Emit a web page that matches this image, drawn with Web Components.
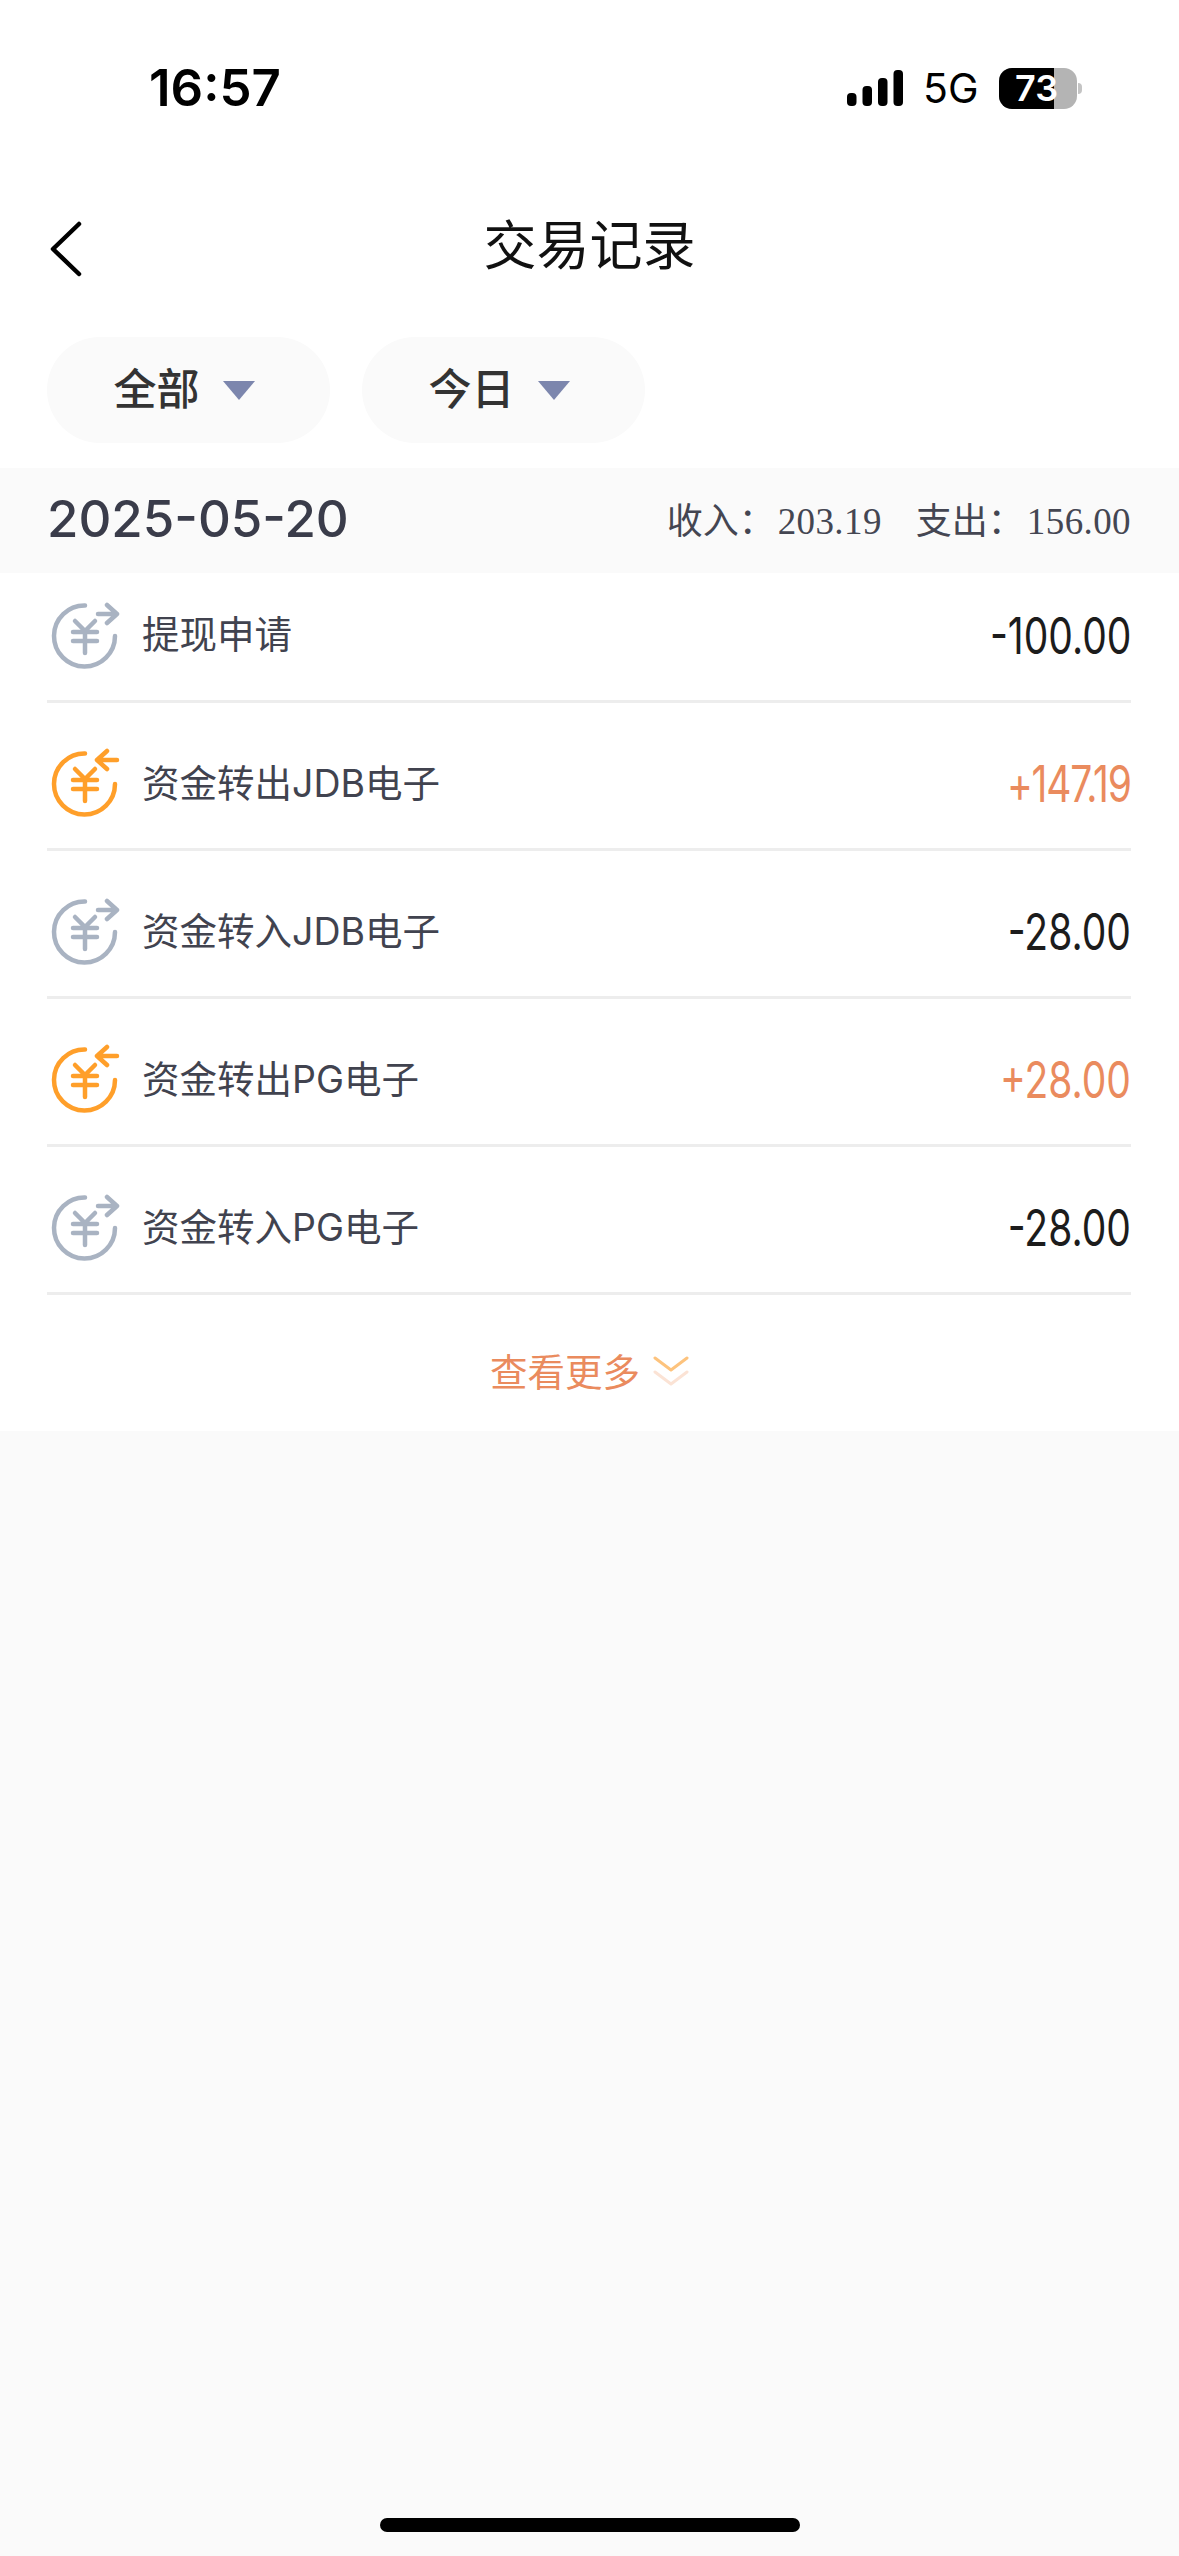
<!DOCTYPE html>
<html><head><meta charset="utf-8">
<style>
html,body{margin:0;padding:0;background:#fafafa;font-family:"Noto Sans CJK SC","Noto Sans",sans-serif}
</style></head><body>
<record-page></record-page>
<script>
const CJK='"Noto Sans CJK SC","Noto Sans",sans-serif';
class StatusBar extends HTMLElement{
  constructor(){super();this.attachShadow({mode:'open'}).innerHTML=`<style>
  :host{display:flex;height:177px;background:#fff;box-sizing:border-box;padding:60px 102px 0 149px;align-items:flex-start;justify-content:space-between;font-family:Inter,"Liberation Sans",sans-serif;color:#000}
  .t{font-size:51px;font-weight:600;line-height:56px}
  .r{display:flex;align-items:center;gap:22px;height:56px}
  .g{font-size:41px;font-weight:400;line-height:56px;width:52px;margin-left:-2px;margin-right:2px;white-space:nowrap}
  .b{position:relative;width:78px;height:41px;border-radius:13px;background:#b4b4b4}
  .b i{position:absolute;left:0;top:0;bottom:0;width:55px;background:#000;border-radius:13px 0 0 13px}
  .b span{position:absolute;left:16px;top:0;color:#fff;font-size:36px;font-weight:600;line-height:41px}
  .n{position:absolute;left:79px;top:15px;width:4px;height:11px;background:#c4c4c4;border-radius:0 6px 6px 0}
  </style><div class="t">16:57</div><div class="r">
  <svg width="56" height="36" viewBox="0 0 56 36"><rect x="0" y="23" width="9.5" height="13" rx="4"/><rect x="15.500" y="16" width="9.500" height="20" rx="4"/><rect x="31" y="8" width="9.500" height="28" rx="4"/><rect x="46.500" y="0" width="9.500" height="36" rx="4"/></svg>
  <div class="g">5G</div><div class="b"><i></i><span>73</span><div class="n"></div></div></div>`;}
}
class NavBar extends HTMLElement{
  constructor(){super();this.attachShadow({mode:'open'}).innerHTML=`<style>
  :host{display:flex;height:136px;background:#fff;align-items:center;justify-content:center;position:relative;font:400 53px ${CJK};color:#111}
  span{margin-top:-6px}
  svg{position:absolute;left:49px;top:44px}
  </style><svg width="34" height="56" viewBox="0 0 34 56" fill="none" stroke="#000" stroke-width="4.500" stroke-linecap="round" stroke-linejoin="round"><path d="M30 3 4 28l26 25"/></svg><span><slot></slot></span>`;}
}
class FilterPill extends HTMLElement{
  constructor(){super();this.attachShadow({mode:'open'}).innerHTML=`<style>
  :host{display:flex;width:283px;height:106px;border-radius:53px;background:#fafafa;align-items:center;justify-content:center;gap:23px;font:500 43px ${CJK};color:#333;box-sizing:border-box;padding-right:9px}
  span{margin-top:-8px}
  i{width:0;height:0;border-left:16px solid transparent;border-right:16px solid transparent;border-top:19px solid #7c86ad}
  </style><span><slot></slot></span><i></i>`;}
}
class DayHead extends HTMLElement{
  constructor(){super();this.attachShadow({mode:'open'}).innerHTML=`<style>
  :host{display:flex;height:105px;background:#fafafa;align-items:center;justify-content:space-between;padding:0 48px 0 47px;color:#3a3c4a}
  .d{font:500 51px Inter,"Noto Sans",sans-serif;margin-top:-4px}
  .s{font:36px ${CJK};color:#444652;display:flex;gap:34px;margin-top:-6px;align-items:center}
  b{font:37px "Liberation Serif",serif;letter-spacing:.4px;margin-left:3px}
  </style><div class="d">2025-05-20</div><div class="s"><span>收入：<b>203.19</b></span><span>支出：<b>156.00</b></span></div>`;}
}
const ICON=(c,inb)=>`<svg width="72" height="72" viewBox="0 0 72 72" fill="none" stroke="${c}" stroke-width="4.500" stroke-linecap="round" stroke-linejoin="round"><path d="M37 5.500A30.500 30.500 0 1 0 67 36"/><path d="M27 21l10 10 10-10M25 32h24M25 41h24M37 32v21"/>${inb?'<path d="M69 12H49M59 3 49 12l10 9"/>':'<path d="M50 14h19M59 5l10 9-10 9"/>'}</svg>`;
class TxRow extends HTMLElement{
  connectedCallback(){
    const plus=this.getAttribute('amount').startsWith('+');
    this.attachShadow({mode:'open'}).innerHTML=`<style>
    :host{display:flex;height:148px;padding-top:19px;margin:0 48px 0 47px;box-sizing:border-box;border-bottom:3px solid #ededed;align-items:center}
    :host([first]){height:130px;padding-top:0}
    :host([tight]) .a{letter-spacing:-1.500px}
    svg{margin:-2px 0 0 1px}
    .l{margin-left:22px;flex:1;font:37.500px Inter,${CJK};color:#41434f;margin-top:-10px}
    .a{font:400 50px Inter,"Liberation Sans",sans-serif;transform:scaleX(.78);transform-origin:right;color:${plus?'#ea8b5e':'#1c1c1c'};white-space:nowrap;margin-top:-2px}
    </style>${ICON(plus?'#ff9f2a':'#a9b3c2',plus)}<div class="l">${this.getAttribute('label')}</div><div class="a">${this.getAttribute('amount')}</div>`;
  }
}
class RecordPage extends HTMLElement{
  constructor(){super();this.attachShadow({mode:'open'}).innerHTML=`<style>
  :host{display:block;height:2556px;position:relative;background:#fafafa}
  .f{display:flex;gap:32px;background:#fff;box-sizing:border-box;height:155px;padding:24px 47px 0}
  .list{background:#fff}
  .more{display:flex;height:136px;padding-top:16px;box-sizing:border-box;align-items:center;justify-content:center;gap:13px;color:#ea8b5e;font:37.500px ${CJK};background:#fff}
  .more span{margin-top:-4px}
  .bar{position:absolute;left:380px;top:2518px;width:420px;height:14px;border-radius:7px;background:#000}
  </style>
  <status-bar></status-bar>
  <nav-bar>交易记录</nav-bar>
  <div class="f"><filter-pill>全部</filter-pill><filter-pill>今日</filter-pill></div>
  <day-head></day-head>
  <div class="list">
  <tx-row first label="提现申请" amount="-100.00"></tx-row>
  <tx-row tight label="资金转出JDB电子" amount="+147.19"></tx-row>
  <tx-row label="资金转入JDB电子" amount="-28.00"></tx-row>
  <tx-row label="资金转出PG电子" amount="+28.00"></tx-row>
  <tx-row label="资金转入PG电子" amount="-28.00"></tx-row>
  </div>
  <div class="more"><span>查看更多</span><svg width="36" height="32" viewBox="0 0 36 32" fill="none" stroke-width="3" stroke-linecap="round" stroke-linejoin="round"><path stroke="#fdc37d" d="M2 3l16 12L34 3"/><path stroke="#fbe3d5" d="M2 17l16 12 16-12"/></svg></div>
  <div class="bar"></div>`;}
}
customElements.define('status-bar',StatusBar);
customElements.define('nav-bar',NavBar);
customElements.define('filter-pill',FilterPill);
customElements.define('day-head',DayHead);
customElements.define('tx-row',TxRow);
customElements.define('record-page',RecordPage);
</script></body></html>
